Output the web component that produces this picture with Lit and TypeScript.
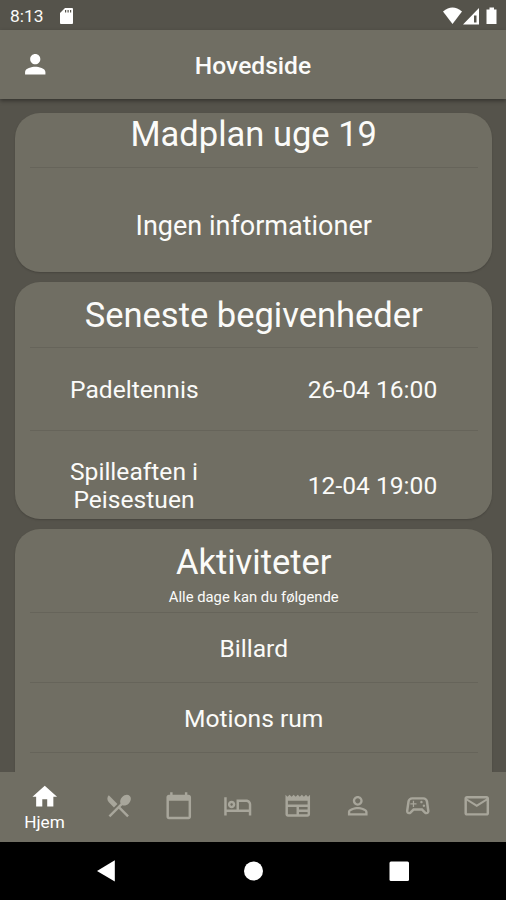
import { LitElement, html, css, svg } from "lit";
import { customElement, property } from "lit/decorators.js";

const ICONS: Record<string, string> = {
  account: "M12 12c2.21 0 4-1.79 4-4s-1.79-4-4-4-4 1.79-4 4 1.79 4 4 4zm0 2c-2.67 0-8 1.34-8 4v2h16v-2c0-2.66-5.33-4-8-4z",
  home: "M10 20v-6h4v6h5v-8h3L12 3 2 12h3v8z",
  food: "M8.1 13.34l2.83-2.83L3.91 3.5c-1.56 1.56-1.56 4.09 0 5.66l4.19 4.18zm6.78-1.81c1.53.71 3.68.21 5.27-1.38 1.91-1.91 2.28-4.65.81-6.12-1.46-1.46-4.2-1.1-6.12.81-1.59 1.59-2.09 3.74-1.38 5.27L3.7 19.87l1.41 1.41L12 14.41l6.88 6.88 1.41-1.41L13.41 13l1.47-1.47z",
  calendar: "M20 3h-1V1h-2v2H7V1H5v2H4c-1.1 0-2 .9-2 2v16c0 1.1.9 2 2 2h16c1.1 0 2-.9 2-2V5c0-1.1-.9-2-2-2zm0 18H4V8h16v13z",
  bed: "M7 14c1.66 0 3-1.34 3-3S8.66 8 7 8s-3 1.34-3 3 1.34 3 3 3zm0-4c.55 0 1 .45 1 1s-.45 1-1 1-1-.45-1-1 .45-1 1-1zm12-3h-8v8H3V5H1v15h2v-3h18v3h2v-9c0-2.21-1.79-4-4-4zm2 8h-8V9h6c1.1 0 2 .9 2 2v4z",
  news: "M22 3l-1.67 1.67L18.67 3 17 4.67 15.33 3l-1.66 1.67L12 3l-1.67 1.67L8.67 3 7 4.67 5.33 3 3.67 4.67 2 3v16c0 1.1.9 2 2 2h16c1.1 0 2-.9 2-2V3zM11 19H4v-6h7v6zm9 0h-7v-2h7v2zm0-4h-7v-2h7v2zm0-4H4V8h16v3z",
  person: "M12 5.9c1.16 0 2.1.94 2.1 2.1s-.94 2.1-2.1 2.1S9.9 9.16 9.9 8s.94-2.1 2.1-2.1m0 9c2.97 0 6.1 1.46 6.1 2.1v1.1H5.9V17c0-.64 3.13-2.1 6.1-2.1M12 4C9.79 4 8 5.79 8 8s1.79 4 4 4 4-1.79 4-4-1.79-4-4-4zm0 9c-2.67 0-8 1.34-8 4v3h16v-3c0-2.66-5.33-4-8-4z",
  games: "M21.58 16.09l-1.09-7.66C20.21 6.46 18.52 5 16.53 5H7.47C5.48 5 3.79 6.46 3.51 8.43l-1.09 7.66C2.2 17.63 3.39 19 4.94 19c.68 0 1.32-.27 1.8-.75L9 16h6l2.25 2.25c.48.48 1.13.75 1.8.75 1.56 0 2.75-1.37 2.53-2.91zm-2.1.72c-.08.09-.21.19-.42.19-.15 0-.29-.06-.39-.16L15.83 14H8.17l-2.84 2.84c-.1.1-.24.16-.39.16-.21 0-.34-.1-.42-.19s-.16-.23-.13-.44l1.09-7.66C5.63 7.74 6.48 7 7.47 7h9.06c.99 0 1.84.74 1.98 1.72l1.09 7.66c.03.2-.05.34-.12.43zM9 8H8v2H6v1h2v2h1v-2h2v-1H9zM17 11a1 1 0 1 0 .01 0zM15 8a1 1 0 1 0 .01 0z",
  mail: "M22 6c0-1.1-.9-2-2-2H4c-1.1 0-2 .9-2 2v12c0 1.1.9 2 2 2h16c1.1 0 2-.9 2-2V6zm-2 0l-8 5-8-5h16zm0 12H4V8l8 5 8-5v10z",
};

@customElement("md-icon")
class MdIcon extends LitElement {
  @property() name = "";
  static styles = css`
    :host { display: block; width: 29.5px; height: 29.5px; }
    svg { display: block; width: 100%; height: 100%; fill: currentColor; }
  `;
  render() {
    return html`<svg viewBox="0 0 24 24">${svg`<path d=${ICONS[this.name]}></path>`}</svg>`;
  }
}

@customElement("app-root")
class AppRoot extends LitElement {
  static styles = css`
    :host {
      display: flex; flex-direction: column; width: 506px; height: 900px;
      overflow: hidden; background: #55534b; color: #fbfbf9;
      font-family: Roboto, sans-serif;
    }
    * { box-sizing: border-box; }
    .status { flex: none; height: 30px; padding: 1px 8px 0 10px; display: flex; align-items: center; font-size: 17.4px; }
    .status svg { display: block; fill: #fff; }
    .sd { margin-left: 16px; }
    .signals { margin-left: auto; }
    .bar {
      flex: none; height: 69px; display: grid; grid-template-columns: 70px 1fr 70px;
      align-items: center; background: #706e63; position: relative;
      box-shadow: 0 2px 4px rgba(0,0,0,.38);
    }
    .bar md-icon { margin-left: 20px; width: 30.5px; height: 30.5px; color: #fff; }
    .bar h1 { margin: 2px 0 0; font-size: 24.6px; font-weight: 500; text-align: center; line-height: 30px; }
    .content { flex: 1; min-height: 0; overflow: hidden; padding: 14px 14.5px 0 15px; display: flex; flex-direction: column; gap: 10px; }
    .card { flex: none; background: #706e63; border-radius: 25px; padding: 0 14px 0 15px; text-align: center; overflow: hidden; box-shadow: 0 1px 2px rgba(0,0,0,.18); }
    h2 { margin: 0; font-size: 34.5px; font-weight: 400; line-height: 40px; }
    .row { border-top: 1px solid #66645a; font-size: 24.6px; line-height: 28px; display: flex; align-items: center; justify-content: center; }
    .menu { height: 159px; }
    .menu h2 { height: 54px; padding-top: 1px; }
    .menu .row { height: 105px; padding-top: 11px; font-size: 27px; }
    .events { height: 237px; }
    .events h2 { height: 65px; padding-top: 13px; }
    .events .row { height: 83px; padding: 2px 40px 0 40px; justify-content: space-between; }
    .events .row.tall { height: 109px; }
    .name { width: 128px; white-space: nowrap; }
    .time { width: 130px; white-space: nowrap; }
    .acts { height: 300px; }
    .acts header { height: 83px; padding-top: 13px; }
    .acts p { margin: 6px 0 0; font-size: 14.8px; line-height: 19px; }
    .acts .row { height: 70px; padding-top: 2px; }
    .tabs { flex: none; height: 70px; background: #706e63; display: grid; grid-template-columns: 89px repeat(7, 59.7px); color: #a8a69b; position: relative; }
    .tab { display: flex; flex-direction: column; align-items: center; justify-content: center; padding-bottom: 2px; }
    .tab.on { color: #fff; justify-content: flex-start; padding-top: 10px; font-size: 17.2px; line-height: 20px; }
    .sys { flex: none; height: 58px; background: #000; }
    .sys svg { display: block; fill: #fff; }
  `;

  private events = [
    { name: html`Padeltennis`, time: "26-04 16:00", cls: "row" },
    { name: html`Spilleaften i<br />Peisestuen`, time: "12-04 19:00", cls: "row tall" },
  ];

  render() {
    return html`
      <div class="status">
        <span>8:13</span>
        <svg class="sd" width="14" height="16" viewBox="0 0 14 16">
          <path fill-rule="evenodd" d="M5 0h6.8C12.6 0 13 .5 13 1.3v13.4c0 .8-.4 1.3-1.2 1.3H1.2C.5 16 0 15.5 0 14.700V5zM5 2v2.500h1.200V2zM7.500 2v2.500h1.200V2zM10 2v2.500h1.200V2z"></path>
        </svg>
        <svg class="signals" width="55" height="18" viewBox="0 0 55 18">
          <path d="M0 4.500Q9.500-3.500 19 4.500L9.500 17z"></path>
          <path fill-rule="evenodd" d="M36 1v16.500H20zM31 8.500v7h2.500v-7z"></path>
          <path d="M46.500.5h4.500v2h2.500V17h-10V2.500h3z"></path>
        </svg>
      </div>
      <div class="bar"><md-icon name="account"></md-icon><h1>Hovedside</h1></div>
      <div class="content">
        <section class="card menu">
          <h2>Madplan uge 19</h2>
          <div class="row">Ingen informationer</div>
        </section>
        <section class="card events">
          <h2>Seneste begivenheder</h2>
          ${this.events.map((e) => html`<div class=${e.cls}><span class="name">${e.name}</span><span class="time">${e.time}</span></div>`)}
        </section>
        <section class="card acts">
          <header><h2>Aktiviteter</h2><p>Alle dage kan du følgende</p></header>
          <div class="row">Billard</div>
          <div class="row">Motions rum</div>
          <div class="row"></div>
        </section>
      </div>
      <nav class="tabs">
        <div class="tab on"><md-icon name="home"></md-icon><span>Hjem</span></div>
        ${["food", "calendar", "bed", "news", "person", "games", "mail"].map(
          (n) => html`<div class="tab"><md-icon name=${n}></md-icon></div>`)}
      </nav>
      <div class="sys">
        <svg width="506" height="58" viewBox="0 0 506 58">
          <path d="M97 29L114.800 18.300V39.500z"></path>
          <circle cx="253.500" cy="29" r="9.500"></circle>
          <rect x="389.500" y="19.500" width="19.500" height="19.500" rx="1.500"></rect>
        </svg>
      </div>
    `;
  }
}
